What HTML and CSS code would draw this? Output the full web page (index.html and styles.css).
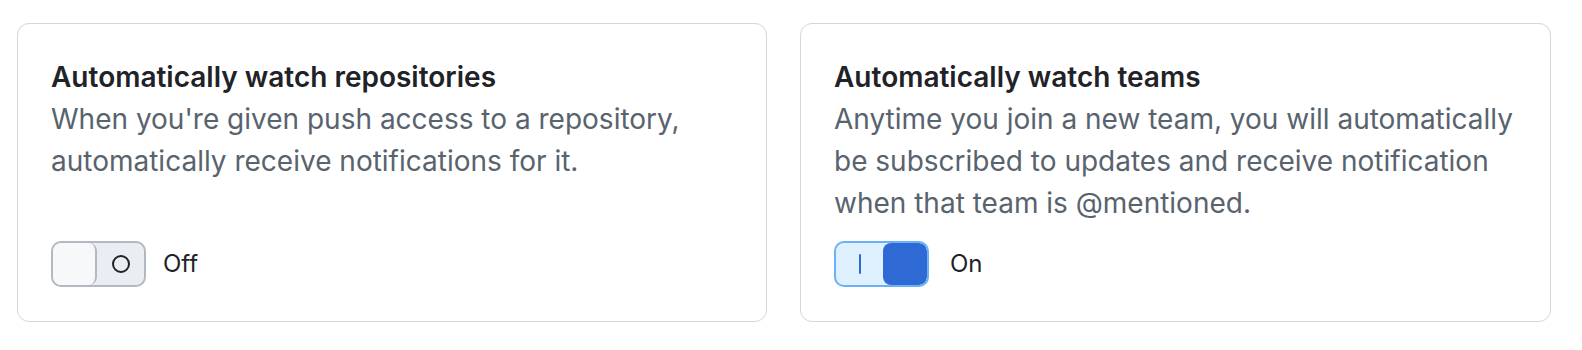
FILE: index.html
```html
<!DOCTYPE html>
<html lang="en">
<head>
<meta charset="utf-8">
<title>Watch settings</title>
<link rel="stylesheet" href="styles.css">
</head>
<body>
<div class="grid">
  <section class="card">
    <h2 class="title">Automatically watch repositories</h2>
    <p class="desc">When you're given push access to a repository,<br>automatically receive notifications for it.</p>
    <div class="toggle-row">
      <button class="switch" type="button" aria-pressed="false">
        <span class="track">
          <span class="knob"></span>
          <span class="icon-slot">
            <svg width="20" height="20" viewBox="0 0 20 20"><circle cx="10" cy="10" r="8" fill="none" stroke="#1f2328" stroke-width="2"/></svg>
          </span>
        </span>
      </button>
      <span class="status status-off">Off</span>
    </div>
  </section>
  <section class="card">
    <h2 class="title">Automatically watch teams</h2>
    <p class="desc">Anytime you join a new team, you will automatically<br>be subscribed to updates and receive notification<br>when that team is @mentioned.</p>
    <div class="toggle-row">
      <button class="switch switch-on" type="button" aria-pressed="true">
        <span class="track">
          <span class="icon-slot">
            <svg width="4" height="22" viewBox="0 0 4 22"><rect x="1" y="1" width="2" height="20" rx="1" fill="#2f6ad4"/></svg>
          </span>
          <span class="knob"></span>
        </span>
      </button>
      <span class="status status-on">On</span>
    </div>
  </section>
</div>
</body>
</html>
```

FILE: styles.css
```css
* { box-sizing: border-box; }
html, body { margin: 0; background: #ffffff; }
body {
  font-family: Inter, "Noto Sans", "Liberation Sans", sans-serif;
  color: #1f2328;
}
.grid {
  display: grid;
  grid-template-columns: 750px 751px;
  column-gap: 33px;
  padding: 23px 31px 0 17px;
}
.card {
  display: flex;
  flex-direction: column;
  border: 1px solid #d0d7de;
  border-radius: 12px;
  padding: 32px 33px 34px 33px;
  min-height: 299px;
}
.title {
  margin: 0;
  font-size: 28px;
  line-height: 42px;
  font-weight: 600;
  color: #1f2328;
}
.desc {
  margin: 0;
  font-size: 28px;
  line-height: 42px;
  color: #59636e;
}
.toggle-row {
  margin-top: auto;
  display: flex;
  align-items: center;
}
.switch {
  padding: 0;
  margin: 0;
  border: 0;
  background: none;
  cursor: pointer;
}
.track {
  display: flex;
  width: 95px;
  height: 46px;
  border: 2px solid #b1b9c2;
  border-radius: 10px;
  background: #eaeef2;
  overflow: hidden;
}
.knob {
  width: 44px;
  height: 100%;
  background: #f6f8fa;
  border-right: 2px solid #b1b9c2;
  border-radius: 8px;
}
.icon-slot {
  flex: 1;
  display: flex;
  align-items: center;
  justify-content: center;
}
.switch-on .track {
  border-color: #6cb1f7;
  background: #dff0ff;
}
.switch-on .knob {
  background: #2f6ad4;
  border-right: 0;
  width: 44px;
}
.status {
  font-size: 24px;
  line-height: 36px;
  color: #1f2328;
}
.status-off { margin-left: 17px; }
.status-on { margin-left: 21px; }
```
